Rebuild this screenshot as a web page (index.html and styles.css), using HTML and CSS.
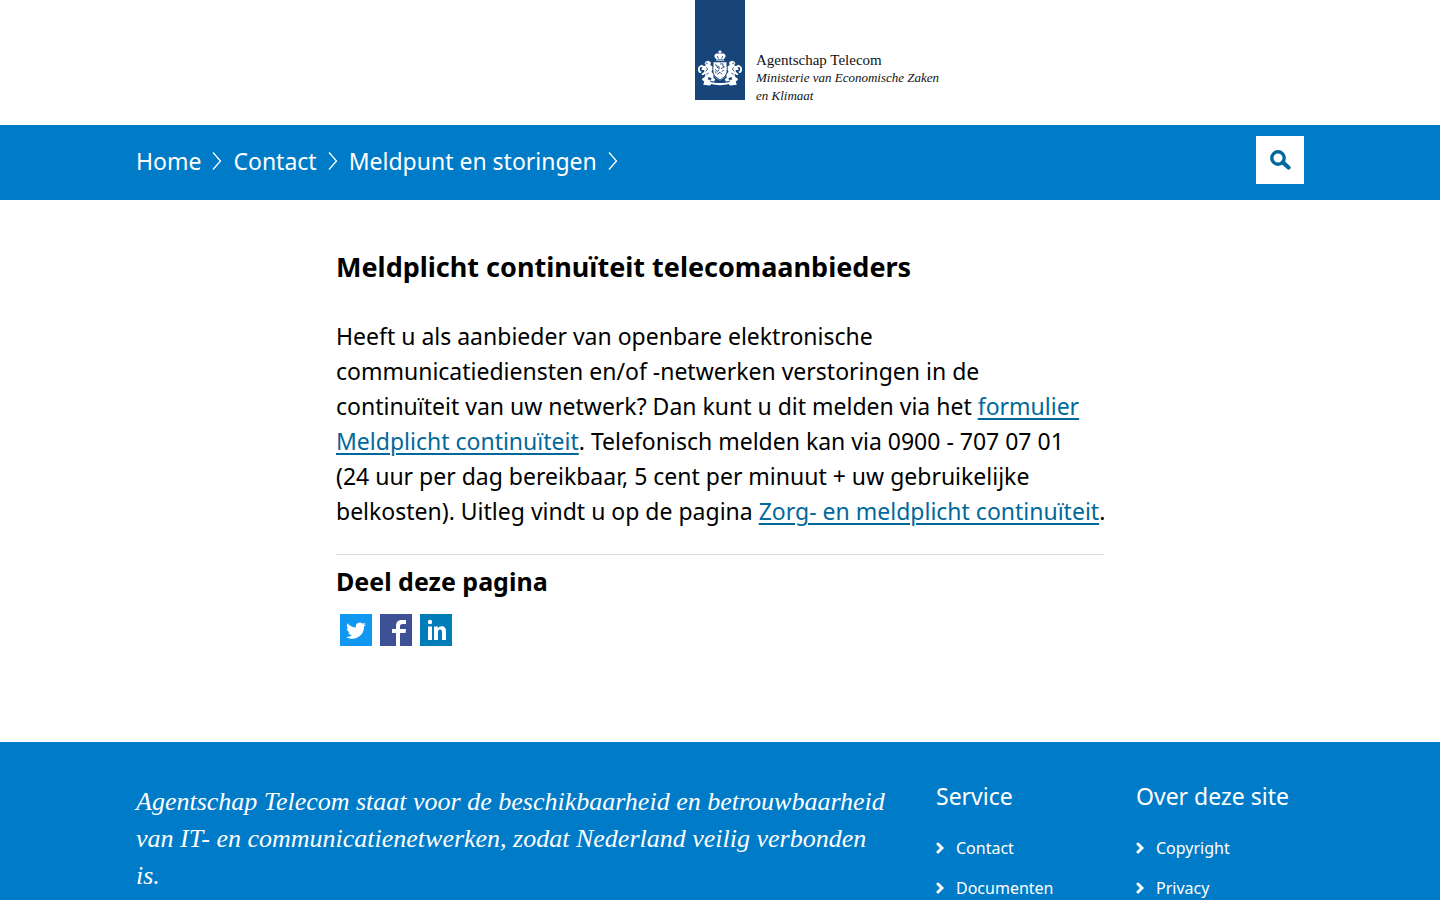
FILE: index.html
```html
<!DOCTYPE html>
<html lang="nl">
<head>
<meta charset="utf-8">
<meta name="viewport" content="width=device-width, initial-scale=1">
<title>Meldplicht continuïteit telecomaanbieders</title>
<link rel="stylesheet" href="styles.css">
</head>
<body>
<svg class="sprite" aria-hidden="true">
  <symbol id="crumb" viewBox="0 0 10 20"><path d="M1 1.500l7.500 8.500L1 18.500" fill="none" stroke="currentColor" stroke-width="1.300"/></symbol>
  <symbol id="chevron" viewBox="0 0 8 12"><path d="M2 2l4 4-4 4" fill="none" stroke="currentColor" stroke-width="3" stroke-linecap="round"/></symbol>
</svg>
<header class="header">
  <div class="brand">
    <div class="ribbon">
      <svg class="arms" viewBox="0 0 46 38" aria-hidden="true" fill="#fff">
        <path d="M22.300 0h1.400v1.200H25v1.200h-1.300v1.400c2-.8 4.600-.3 5.100 1.500.3 1.400-.7 2.600-1.600 3.400v2.500h-8.400V8.700c-.9-.8-1.900-2-1.600-3.400.5-1.800 3.100-2.300 5.100-1.500V2.400H21V1.200h1.300z"/>
        <path d="M16 12.500h14v11c0 4-3.500 6-7 8-3.500-2-7-4-7-8z"/>
        <path id="lion" d="M14.500 16.500l-1.500-1 .5-3-3-1.500-3 1-.5 2 1.500 1.500-2 1-3-1.500-1.500 2 2.500 1-1 2.500 3 0 0 2-3 2.500 1.500 1 3-1.500-1 3.500-3 2 1.500 2 4.500-1 1-3 3 1-.5 3 3.500.5 1-2.500-2-1 .5-4-2.500-2.500 1.500-2 2 1 1-3zM4 22.500c-3-1-2.500-4.500-.5-5.500L2.500 15.800c-3.500 1.700-3.500 6.700 0 8.200z"/>
        <use href="#lion" transform="translate(46 0) scale(-1 1)"/>
        <path d="M5 29.500l8 1.500v2c5 1.500 15 1.500 20 0v-2l8-1.500-1.500 3 1 3.500-7 .8-1.500-1.500c-5 1.500-13 1.500-18 0l-1.500 1.500-7-.8 1-3.500z"/>
        <g fill="none" stroke="#17457a" stroke-width="1">
          <path d="M20 6l1.500 2.500M26 6l-1.500 2.500M18.500 10h9M18 15l2 1v2l2-1v3M22 21l-2 1-2-2M26 13.500v3l2 1M24 19l3-1M20 25l3-2 2 2M24 13v2M27 21l-2 1M18 22l1 2"/>
          <path d="M8 13l2 1M9 18l1 2-2 2M9 25l2-1M38 13l-2 1M37 18l-1 2 2 2M37 25l-2-1M15.500 13v10l2 4 5.500 4 5.500-4 2-4V13"/>
        </g>
      </svg>
    </div>
    <div class="brand-text">
      <span>Agentschap Telecom</span>
      <i>Ministerie van Economische Zaken<br>en Klimaat</i>
    </div>
  </div>
</header>
<div class="bar">
  <div class="wrap bar-inner">
    <nav class="crumbs" aria-label="Kruimelpad">
      <a href="#">Home</a><svg class="crumb-icon" aria-hidden="true"><use href="#crumb"/></svg>
      <a href="#">Contact</a><svg class="crumb-icon" aria-hidden="true"><use href="#crumb"/></svg>
      <a href="#">Meldpunt en storingen</a><svg class="crumb-icon" aria-hidden="true"><use href="#crumb"/></svg>
    </nav>
    <button class="search" type="button" aria-label="Zoeken">
      <svg viewBox="0 0 22 20" width="22" height="20" aria-hidden="true" fill="none" stroke="#00689b"><circle cx="9" cy="8" r="6.200" stroke-width="3.400"/><path d="M14 12.500l5.500 5" stroke-width="4.300" stroke-linecap="round"/></svg>
    </button>
  </div>
</div>
<main class="main">
  <h1>Meldplicht continuïteit telecomaanbieders</h1>
  <p>Heeft u als aanbieder van openbare elektronische communicatiediensten en/of -netwerken verstoringen in de continuïteit van uw netwerk? Dan kunt u dit melden via het <a href="#">formulier Meldplicht continuïteit</a>. Telefonisch melden kan via 0900 - 707 07 01 (24&nbsp;uur per dag bereikbaar, 5 cent per minuut + uw gebruikelijke belkosten). Uitleg vindt u op de pagina <a href="#">Zorg- en meldplicht continuïteit</a>.</p>
  <section class="share">
    <h2>Deel deze pagina</h2>
    <div class="share-list">
      <a class="twitter" href="#" aria-label="Twitter"><svg viewBox="0 0 32 32" aria-hidden="true"><path fill="#fff" d="M26 10.400c-.7.300-1.500.5-2.300.6.800-.5 1.500-1.300 1.800-2.200-.8.500-1.700.8-2.600 1a4.100 4.100 0 0 0-7 3.700c-3.400-.2-6.400-1.800-8.500-4.300-1.100 1.900-.5 4.300 1.300 5.500-.7 0-1.300-.2-1.900-.5 0 2 1.400 3.700 3.300 4.100-.6.200-1.200.2-1.900.1.500 1.600 2 2.800 3.800 2.800A8.300 8.300 0 0 1 6 22.900c1.800 1.200 4 1.800 6.300 1.800 7.600 0 12-6.400 11.700-12.200.8-.6 1.500-1.300 2-2.100z"/></svg></a>
      <a class="facebook" href="#" aria-label="Facebook"><svg viewBox="0 0 32 32" aria-hidden="true"><path fill="#fff" d="M16 32V19h-4v-4h4v-3c0-4 2-6 6-6h4v4h-3c-2 0-3 .8-3 2v3h6l-.5 4H20v13z"/></svg></a>
      <a class="linkedin" href="#" aria-label="LinkedIn"><svg viewBox="0 0 32 32" aria-hidden="true"><path fill="#fff" d="M8 12.500h4V26H8zM14 12.500h3.800v1.800c.8-1.300 2-2.100 3.900-2.100 3.400 0 4.300 2.300 4.300 5.500V26h-4v-7.400c0-1.700-.4-3-1.900-3-1.600 0-2.100 1.300-2.100 3V26h-4z"/><circle cx="10" cy="8" r="2.200" fill="#fff"/></svg></a>
    </div>
  </section>
</main>
<footer class="footer">
  <div class="wrap footer-grid">
    <p class="motto">Agentschap Telecom staat voor de beschikbaarheid en betrouwbaarheid van IT- en communicatienetwerken, zodat Nederland veilig verbonden<br>is.</p>
    <section>
      <h2>Service</h2>
      <ul>
        <li><a href="#"><svg class="chevron" aria-hidden="true"><use href="#chevron"/></svg>Contact</a></li>
        <li><a href="#"><svg class="chevron" aria-hidden="true"><use href="#chevron"/></svg>Documenten</a></li>
      </ul>
    </section>
    <section>
      <h2>Over deze site</h2>
      <ul>
        <li><a href="#"><svg class="chevron" aria-hidden="true"><use href="#chevron"/></svg>Copyright</a></li>
        <li><a href="#"><svg class="chevron" aria-hidden="true"><use href="#chevron"/></svg>Privacy</a></li>
      </ul>
    </section>
  </div>
</footer>
</body>
</html>
```
FILE: styles.css
```css
* { box-sizing: border-box; }
html, body { height: 100%; }
body {
  margin: 0;
  display: flex;
  flex-direction: column;
  background: #fff;
  color: #000;
  font-family: "Noto Sans", "Open Sans", sans-serif;
}
h1, h2, p, ul { margin: 0; padding: 0; }
ul { list-style: none; }
.sprite { display: none; }
.wrap { width: 100%; max-width: 1200px; margin: 0 auto; padding: 0 16px; }
.header { padding-bottom: 24px; }
.brand { display: flex; align-items: flex-end; gap: 11px; margin-left: calc(50% - 25px); }
.ribbon { height: 100px; padding: 50px 3px 0; background: #17457a; margin-bottom: 1px; }
.arms { display: block; width: 44px; height: 37px; }
.brand-text { font: 13px/18px "Liberation Serif", serif; margin-bottom: -4px; color: #111; }
.brand-text span, .brand-text i { display: block; }
.brand-text span { font-size: 15px; }
.bar { background: #007bc7; padding: 11px 0 14px; }
.bar-inner { display: flex; justify-content: space-between; align-items: flex-start; }
.crumbs { display: flex; align-items: center; gap: 11px; height: 50px; font-size: 23px; line-height: 32px; }
.crumbs a { color: #fff; text-decoration: none; }
.crumb-icon { width: 10px; height: 20px; color: #fff; }
.search { width: 48px; height: 48px; padding: 0; border: 0; background: #fff; display: grid; place-items: center; }
.main { width: 100%; max-width: 800px; margin: 0 auto; padding: 48px 16px 96px; }
h1 { font-size: 27px; line-height: 38px; margin-bottom: 33px; }
.main p { font-size: 23px; line-height: 35px; margin-right: -3px; }
.main p a { color: #00689b; text-underline-offset: 3px; text-decoration-thickness: 2px; }
.share { margin-top: 25px; padding-top: 8px; border-top: 1px solid #dcdcdc; }
.share h2 { font-size: 25px; line-height: 36px; }
.share-list { display: flex; gap: 8px; padding: 15px 4px 0; }
.share-list a { width: 32px; height: 32px; }
.share-list svg { display: block; }
.twitter { background: #1098f0; }
.facebook { background: #3f5196; }
.linkedin { background: #007cb8; }
.footer { flex: 1 0 auto; background: #007bc7; color: #fff; padding-top: 36px; }
.footer-grid { display: grid; grid-template-columns: 1fr 168px 168px; gap: 32px; }
.motto { font: italic 26px/37px "Liberation Serif", serif; padding-top: 5px; }
.footer h2 { font-size: 23px; font-weight: 400; line-height: 36px; margin-bottom: 14px; white-space: nowrap; }
.footer ul { display: grid; gap: 16px; padding-top: 8px; }
.footer li a { display: flex; align-items: center; gap: 12px; color: #fff; text-decoration: none; font-size: 16px; line-height: 24px; }
.chevron { width: 8px; height: 12px; }
```
